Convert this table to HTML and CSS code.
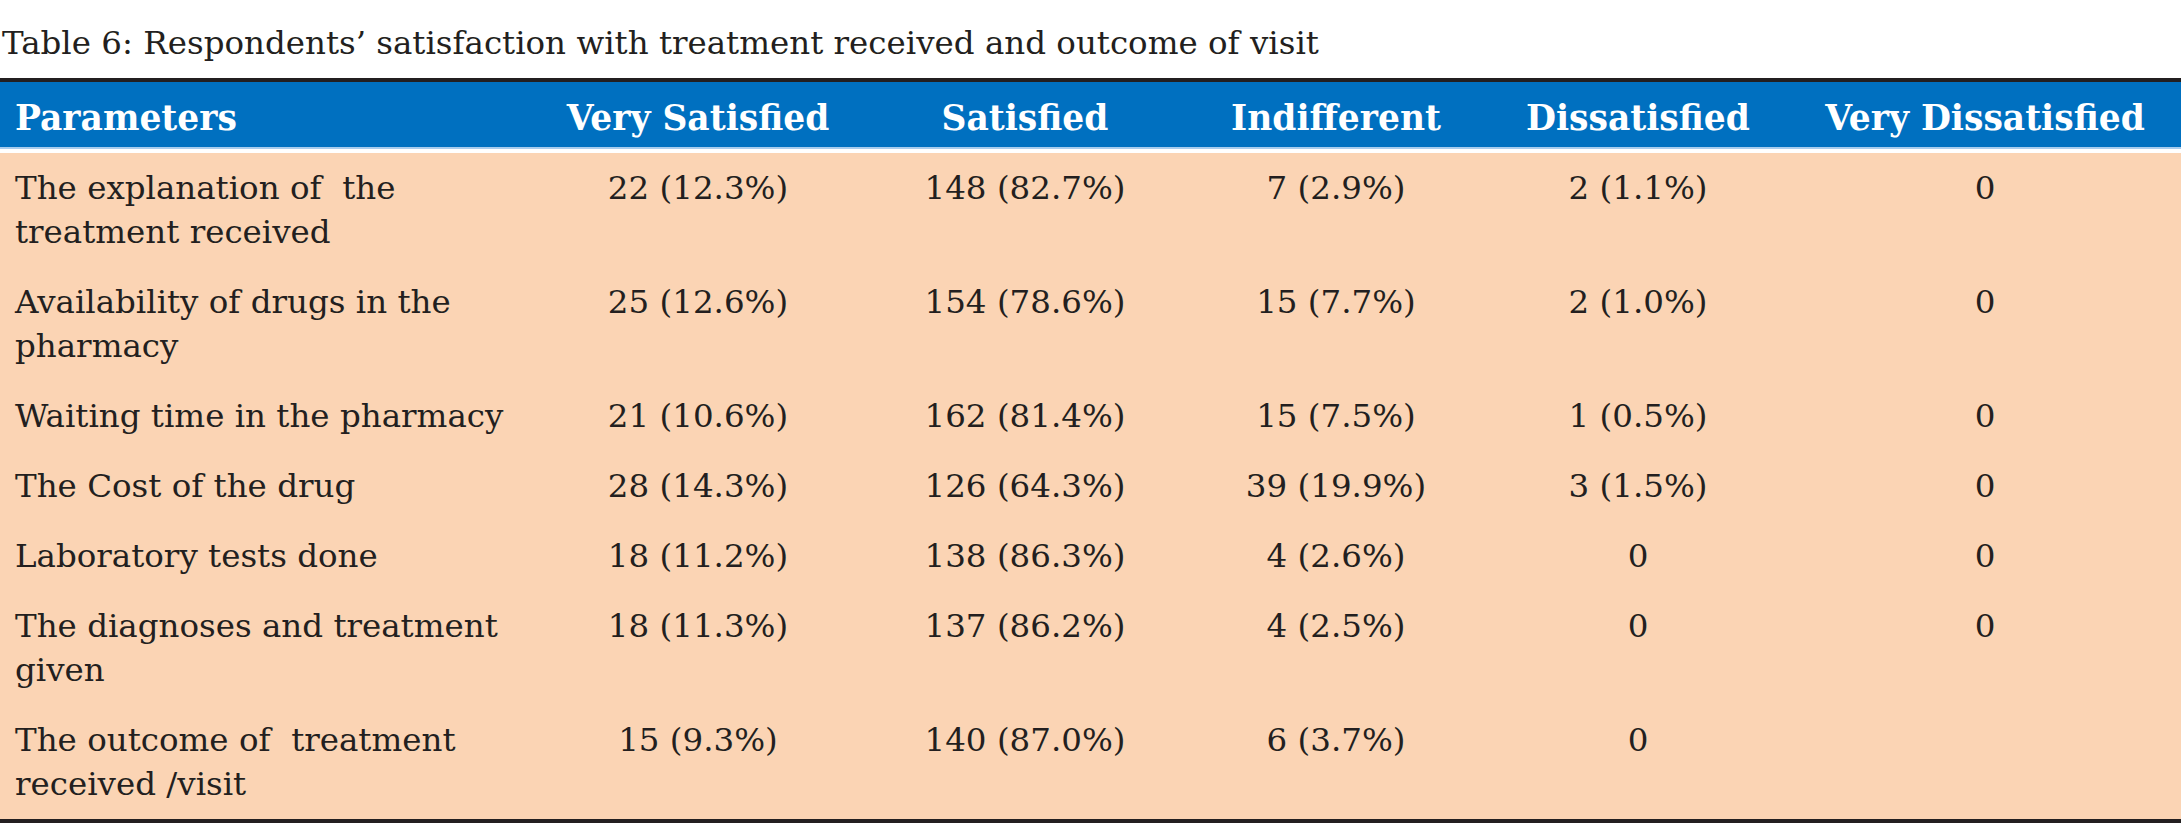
FILE: index.html
```html
<!DOCTYPE html>
<html lang="en">
<head>
<meta charset="utf-8">
<title>Table 6</title>
<link rel="stylesheet" href="styles.css">
</head>
<body>
<p class="caption">Table 6: Respondents’ satisfaction with treatment received and outcome of visit</p>
<table class="data">
  <colgroup>
    <col class="c-param">
    <col class="c-vs">
    <col class="c-s">
    <col class="c-i">
    <col class="c-d">
    <col class="c-vd">
  </colgroup>
  <thead>
    <tr>
      <th class="param">Parameters</th>
      <th>Very Satisfied</th>
      <th>Satisfied</th>
      <th>Indifferent</th>
      <th>Dissatisfied</th>
      <th>Very Dissatisfied</th>
    </tr>
  </thead>
  <tbody>
    <tr>
      <td class="param">The explanation of&nbsp; the<br>treatment received</td>
      <td>22 (12.3%)</td>
      <td>148 (82.7%)</td>
      <td>7 (2.9%)</td>
      <td>2 (1.1%)</td>
      <td>0</td>
    </tr>
    <tr>
      <td class="param">Availability of drugs in the<br>pharmacy</td>
      <td>25 (12.6%)</td>
      <td>154 (78.6%)</td>
      <td>15 (7.7%)</td>
      <td>2 (1.0%)</td>
      <td>0</td>
    </tr>
    <tr>
      <td class="param">Waiting time in the pharmacy</td>
      <td>21 (10.6%)</td>
      <td>162 (81.4%)</td>
      <td>15 (7.5%)</td>
      <td>1 (0.5%)</td>
      <td>0</td>
    </tr>
    <tr>
      <td class="param">The Cost of the drug</td>
      <td>28 (14.3%)</td>
      <td>126 (64.3%)</td>
      <td>39 (19.9%)</td>
      <td>3 (1.5%)</td>
      <td>0</td>
    </tr>
    <tr>
      <td class="param">Laboratory tests done</td>
      <td>18 (11.2%)</td>
      <td>138 (86.3%)</td>
      <td>4 (2.6%)</td>
      <td>0</td>
      <td>0</td>
    </tr>
    <tr>
      <td class="param">The diagnoses and treatment<br>given</td>
      <td>18 (11.3%)</td>
      <td>137 (86.2%)</td>
      <td>4 (2.5%)</td>
      <td>0</td>
      <td>0</td>
    </tr>
    <tr>
      <td class="param">The outcome of&nbsp; treatment<br>received /visit</td>
      <td>15 (9.3%)</td>
      <td>140 (87.0%)</td>
      <td>6 (3.7%)</td>
      <td>0</td>
      <td></td>
    </tr>
  </tbody>
</table>
</body>
</html>
```

FILE: styles.css
```css
html, body {
  margin: 0;
  padding: 0;
  background: #ffffff;
}

body {
  font-family: "DejaVu Serif", "Liberation Serif", serif;
  color: #231f20;
  width: 2181px;
}

.caption {
  margin: 0 0 12px 0;
  padding: 21px 0 0 2px;
  font-size: 32.5px;
  line-height: 45px;
  height: 45px;
  white-space: nowrap;
}

.data {
  width: 2181px;
  table-layout: fixed;
  border-collapse: separate;
  border-spacing: 0;
  border-top: 4px solid #231f20;
  border-bottom: 4px solid #231f20;
}

.c-param { width: 531px; }
.c-vs { width: 334px; }
.c-s { width: 320px; }
.c-i { width: 302px; }
.c-d { width: 302px; }
.c-vd { width: 392px; }

.data th {
  background: #0070c0;
  color: #ffffff;
  font-weight: bold;
  font-size: 34.5px;
  line-height: 40px;
  padding: 16px 0 9px 0;
  text-align: center;
  border-bottom: 2px solid #a9cdee;
  white-space: nowrap;
}

.data td {
  background: #fbd4b4;
  font-size: 32.5px;
  line-height: 44px;
  padding: 13px 0 13px 0;
  text-align: center;
  vertical-align: top;
  white-space: nowrap;
}

.data tbody tr:first-child td {
  border-top: 4px solid #ffffff;
}

.data .param {
  text-align: left;
  padding-left: 15px;
}
```
